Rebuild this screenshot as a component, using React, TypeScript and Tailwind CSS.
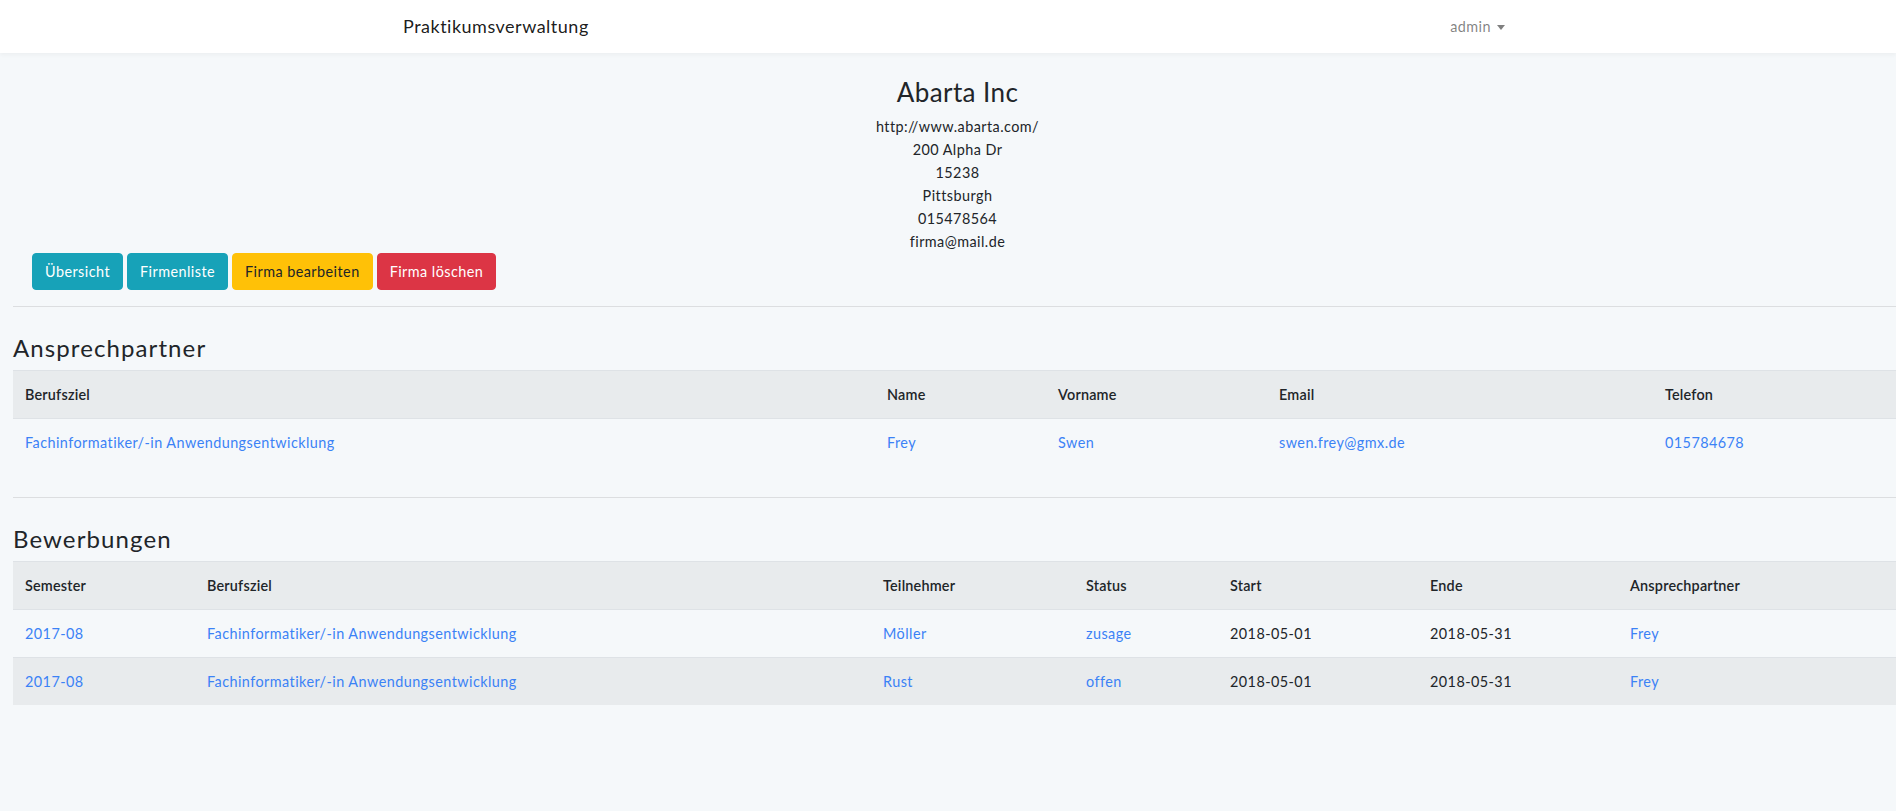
import { useState } from 'react';

const ansprechpartner = [
  { berufsziel: 'Fachinformatiker/-in Anwendungsentwicklung', name: 'Frey', vorname: 'Swen', email: 'swen.frey@gmx.de', telefon: '015784678' },
];

const bewerbungen = [
  { semester: '2017-08', berufsziel: 'Fachinformatiker/-in Anwendungsentwicklung', teilnehmer: 'Möller', status: 'zusage', start: '2018-05-01', ende: '2018-05-31', partner: 'Frey' },
  { semester: '2017-08', berufsziel: 'Fachinformatiker/-in Anwendungsentwicklung', teilnehmer: 'Rust', status: 'offen', start: '2018-05-01', ende: '2018-05-31', partner: 'Frey' },
];

const cell = 'px-3 py-3 border-t border-[#dee2e6] align-top text-left';
const head = cell + ' font-semibold tracking-[0.2px]';
const link = 'text-[#3b82f6] hover:underline';

export default function App() {
  const [menuOpen, setMenuOpen] = useState(false);

  return (
    <div className="min-h-screen bg-[#f5f8fa] text-[#212529] text-[14.4px] leading-[23px] tracking-[0.45px] font-['Lato','Open_Sans',sans-serif] overflow-hidden">
      <nav className="bg-white shadow-[0_2px_4px_rgba(0,0,0,0.04)] h-[53px]">
        <div className="w-[1140px] mx-auto pl-[25px] pr-[13px] h-full flex items-center justify-between">
          <a href="#" className="text-[18px] text-black/90 tracking-[0.5px]">Praktikumsverwaltung</a>
          <button onClick={() => setMenuOpen(!menuOpen)} className="flex items-center gap-[6px] text-black/50 text-[14.4px]">
            admin
            <span className="w-0 h-0 border-l-[4.5px] border-r-[4.5px] border-t-[5px] border-l-transparent border-r-transparent border-t-black/50 mt-[1px]" />
          </button>
        </div>
      </nav>

      <main className="pt-[24px] pl-[13px]">
        <div className="text-center pl-[6px]">
          <h2 className="text-[26px] leading-[30px] mb-[8px] tracking-[0.4px]">Abarta Inc</h2>
          <div>http://www.abarta.com/</div>
          <div>200 Alpha Dr</div>
          <div>15238</div>
          <div>Pittsburgh</div>
          <div>015478564</div>
          <div>firma@mail.de</div>
        </div>

        <div className="flex gap-[4px] ml-[19px]">
          <a href="#" className="px-3 py-[6px] rounded-[4px] border border-[#17a2b8] bg-[#17a2b8] text-white">Übersicht</a>
          <a href="#" className="px-3 py-[6px] rounded-[4px] border border-[#17a2b8] bg-[#17a2b8] text-white">Firmenliste</a>
          <a href="#" className="px-3 py-[6px] rounded-[4px] border border-[#ffc107] bg-[#ffc107] text-[#212529]">Firma bearbeiten</a>
          <a href="#" className="px-3 py-[6px] rounded-[4px] border border-[#dc3545] bg-[#dc3545] text-white">Firma löschen</a>
        </div>

        <hr className="mt-4 border-t border-black/10" />

        <h3 className="text-[24px] leading-[30px] mt-[26px] mb-[7px] tracking-[1.1px]">Ansprechpartner</h3>
        <table className="w-full table-fixed border-collapse">
          <colgroup>
            <col className="w-[862px]" />
            <col className="w-[171px]" />
            <col className="w-[221px]" />
            <col className="w-[386px]" />
            <col />
          </colgroup>
          <tbody>
            <tr className="bg-black/5">
              <th className={head}>Berufsziel</th>
              <th className={head}>Name</th>
              <th className={head}>Vorname</th>
              <th className={head}>Email</th>
              <th className={head}>Telefon</th>
            </tr>
            {ansprechpartner.map((a, i) => (
              <tr key={i}>
                <td className={cell}><a href="#" className={link}>{a.berufsziel}</a></td>
                <td className={cell}><a href="#" className={link}>{a.name}</a></td>
                <td className={cell}><a href="#" className={link}>{a.vorname}</a></td>
                <td className={cell}><a href="#" className={link}>{a.email}</a></td>
                <td className={cell}><a href="#" className={link}>{a.telefon}</a></td>
              </tr>
            ))}
          </tbody>
        </table>

        <hr className="mt-[31px] border-t border-black/10" />

        <h3 className="text-[24px] leading-[30px] mt-[26px] mb-[7px] tracking-[1.1px]">Bewerbungen</h3>
        <table className="w-full table-fixed border-collapse">
          <colgroup>
            <col className="w-[182px]" />
            <col className="w-[676px]" />
            <col className="w-[203px]" />
            <col className="w-[144px]" />
            <col className="w-[200px]" />
            <col className="w-[200px]" />
            <col />
          </colgroup>
          <tbody>
            <tr className="bg-black/5">
              <th className={head}>Semester</th>
              <th className={head}>Berufsziel</th>
              <th className={head}>Teilnehmer</th>
              <th className={head}>Status</th>
              <th className={head}>Start</th>
              <th className={head}>Ende</th>
              <th className={head}>Ansprechpartner</th>
            </tr>
            {bewerbungen.map((b, i) => (
              <tr key={i} className={i % 2 === 1 ? 'bg-black/5' : ''}>
                <td className={cell}><a href="#" className={link}>{b.semester}</a></td>
                <td className={cell}><a href="#" className={link}>{b.berufsziel}</a></td>
                <td className={cell}><a href="#" className={link}>{b.teilnehmer}</a></td>
                <td className={cell}><a href="#" className={link}>{b.status}</a></td>
                <td className={cell}>{b.start}</td>
                <td className={cell}>{b.ende}</td>
                <td className={cell}><a href="#" className={link}>{b.partner}</a></td>
              </tr>
            ))}
          </tbody>
        </table>
      </main>
    </div>
  );
}
